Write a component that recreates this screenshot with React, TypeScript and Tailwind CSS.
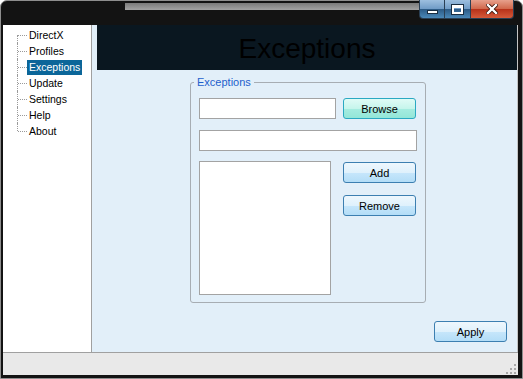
import React from "react"

const treeItems = ["DirectX", "Profiles", "Exceptions", "Update", "Settings", "Help", "About"]

const blueBtn =
    "h-[21px] w-[73px] rounded-[3px] border border-[#3c7fb1] bg-[linear-gradient(to_bottom,#eef7fd_0%,#dff1fc_50%,#c6e6fb_52%,#b3ddf7_100%)] text-[11px] text-black flex items-center justify-center pt-[1px]"

function TreeRow({ label, index, selected }: { label: string; index: number; selected: boolean }) {
    const first = index === 0
    const last = index === treeItems.length - 1
    return (
        <div className="flex h-[16px] items-center">
            <div className="relative h-[16px] w-[10px] shrink-0">
                <span
                    className={`absolute left-0 border-l border-dotted border-[#9a9a9a] ${first ? "top-[8px]" : "top-0"} ${last ? "h-[8px]" : "bottom-0"}`}
                />
                <span className="absolute left-[1px] top-[8px] w-[9px] border-t border-dotted border-[#9a9a9a]" />
            </div>
            <span className={`px-[2px] leading-[15px] ${selected ? "bg-[#0b6699] text-white" : "text-black"}`}>
                {label}
            </span>
        </div>
    )
}

function WindowButtons() {
    return (
        <div className="-mt-[1px] flex h-[19px] overflow-hidden rounded-b-[4px] border border-t-0 border-[#2a3f54]">
            <div className="flex w-[25px] items-end justify-center border-r border-[#2a3f54] bg-[linear-gradient(to_bottom,#9dbfdf_0%,#6f9bc6_50%,#2d5b86_52%,#4a88b8_100%)] pb-[4px]">
                <span className="block h-[4px] w-[11px] border border-[#1a2e42] bg-white" />
            </div>
            <div className="flex w-[26px] items-center justify-center border-r border-[#2a3f54] bg-[linear-gradient(to_bottom,#9dbfdf_0%,#6f9bc6_50%,#2d5b86_52%,#4a88b8_100%)]">
                <span className="block h-[9px] w-[11px] border-[2px] border-t-[3px] border-white outline outline-1 outline-[#1a2e42]" />
            </div>
            <div className="flex w-[42px] items-center justify-center bg-[linear-gradient(to_bottom,#e7a08c_0%,#d0664a_50%,#b8321a_52%,#d55a3a_100%)]">
                <svg width="12" height="10" viewBox="0 0 12 10">
                    <path d="M2 1 L10 9 M10 1 L2 9" stroke="#3a1208" strokeWidth="4" strokeLinecap="square" />
                    <path d="M2 1 L10 9 M10 1 L2 9" stroke="#ffffff" strokeWidth="2.4" strokeLinecap="square" />
                </svg>
            </div>
        </div>
    )
}

export default function App() {
    return (
        <div
            className="flex h-[379px] w-[523px] flex-col rounded-t-[7px] border border-[#8e8e8e] bg-[#131313] text-[11px]"
            style={{ fontFamily: '"Liberation Sans", Arial, sans-serif' }}
        >
            {/* title bar */}
            <div className="flex h-[24px] shrink-0 items-start">
                <div className="w-[124px] shrink-0" />
                <div className="mt-[2px] h-[7px] flex-1 bg-[linear-gradient(to_bottom,#7a7a7a,#a3a3a3)]" />
                <WindowButtons />
                <div className="w-[8px] shrink-0" />
            </div>

            <div className="flex flex-1 flex-col pb-[3px] pl-[2px] pr-[4px]">
                <div className="flex h-[327px] border-r border-[#c4c4c4]">
                    {/* tree */}
                    <div className="w-[89px] shrink-0 border-r border-[#a0a0a0] bg-white pl-[14px] pt-[2px] text-[10.5px]">
                        {treeItems.map((t, i) => (
                            <TreeRow key={t} label={t} index={i} selected={t === "Exceptions"} />
                        ))}
                    </div>

                    {/* main */}
                    <div className="flex flex-1 flex-col bg-[#e2eff9]">
                        <div className="ml-[5px] flex h-[45px] items-center justify-center bg-[#0a1720] pt-[2px]">
                            <h1 className="text-[28px] leading-none text-black">Exceptions</h1>
                        </div>

                        <fieldset className="ml-[98px] mt-[6px] w-[236px] rounded-[3px] border border-[#a7adb3] px-[8px] pb-[7px] pt-[9px]">
                            <legend className="-ml-[5px] px-[3px] leading-[13px] text-[#1e5fcc]">Exceptions</legend>
                            <div className="flex items-center">
                                <div className="h-[21px] w-[137px] border border-[#a3a3a3] bg-white" />
                                <button className="ml-auto mr-[1px] flex h-[21px] w-[73px] items-center justify-center rounded-[3px] border border-[#2aa9c2] bg-[linear-gradient(to_bottom,#e0fbf6_0%,#c6f5ec_50%,#a5ece0_52%,#93e6d8_100%)] pt-[1px] text-[11px] text-black">
                                    Browse
                                </button>
                            </div>
                            <div className="mt-[11px] h-[21px] w-full border border-[#a3a3a3] bg-white" />
                            <div className="mt-[10px] flex">
                                <div className="h-[134px] w-[132px] border border-[#a3a3a3] bg-white" />
                                <div className="ml-auto mr-[1px] mt-[1px] flex flex-col gap-[12px]">
                                    <button className={blueBtn}>Add</button>
                                    <button className={blueBtn}>Remove</button>
                                </div>
                            </div>
                        </fieldset>

                        <div className="mr-[10px] mt-[18px] flex justify-end">
                            <button className={blueBtn}>Apply</button>
                        </div>
                    </div>
                </div>

                {/* status bar */}
                <div className="flex h-[23px] items-end justify-end border-t border-[#a0a0a0] bg-[#e9e9e9] pb-[1px] pr-[2px]">
                    <svg width="10" height="10" viewBox="0 0 10 10">
                        <g fill="#a8a8a8">
                            <rect x="8" y="0" width="2" height="2" />
                            <rect x="4" y="4" width="2" height="2" />
                            <rect x="8" y="4" width="2" height="2" />
                            <rect x="0" y="8" width="2" height="2" />
                            <rect x="4" y="8" width="2" height="2" />
                            <rect x="8" y="8" width="2" height="2" />
                        </g>
                    </svg>
                </div>
            </div>
        </div>
    )
}
